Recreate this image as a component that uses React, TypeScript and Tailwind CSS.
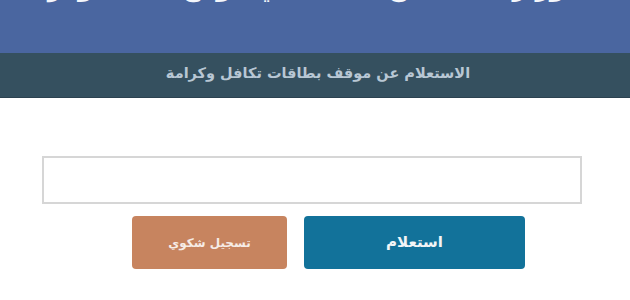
export default function App() {
  return (
    <div
      dir="rtl"
      className="w-[630px] h-[300px] overflow-hidden bg-white"
      style={{ fontFamily: '"DejaVu Sans", "Noto Sans", sans-serif' }}
    >
      {/* Title band, cut off at the top of the screenshot */}
      <header className="h-[53px] bg-[#4a66a0] overflow-hidden flex justify-center">
        <h1 className="mt-[-29px] text-[25px] leading-[34px] font-bold text-[#f4f6fb] whitespace-nowrap mr-[56px]">
          وزارة التضامن الاجتماعي موقع تكافل وكرامة
        </h1>
      </header>

      {/* Subtitle band */}
      <div className="h-[45px] bg-[#35505f] flex items-center justify-center border-b border-[#2c4250]">
        <span className="text-[14.5px] font-bold text-[#b8c7d4] pb-[3px] ml-[6px]">
          الاستعلام عن موقف بطاقات تكافل وكرامة
        </span>
      </div>

      {/* Form */}
      <div className="flex flex-col items-center pt-[58px]">
        <input
          type="text"
          className="w-[540px] h-[48px] border-2 border-[#d6d6d6] bg-white outline-none mr-[6px]"
        />
        <div className="flex gap-[17px] mt-[12px] ml-[27px]">
          <button className="w-[221px] h-[53px] rounded-[4px] bg-[#12729a] text-[#f2f5f7] text-[15px] font-bold">
            استعلام
          </button>
          <button className="w-[155px] h-[53px] rounded-[4px] bg-[#c7845f] text-[#f6ece6] text-[12px] font-bold">
            تسجيل شكوي
          </button>
        </div>
      </div>
    </div>
  );
}
